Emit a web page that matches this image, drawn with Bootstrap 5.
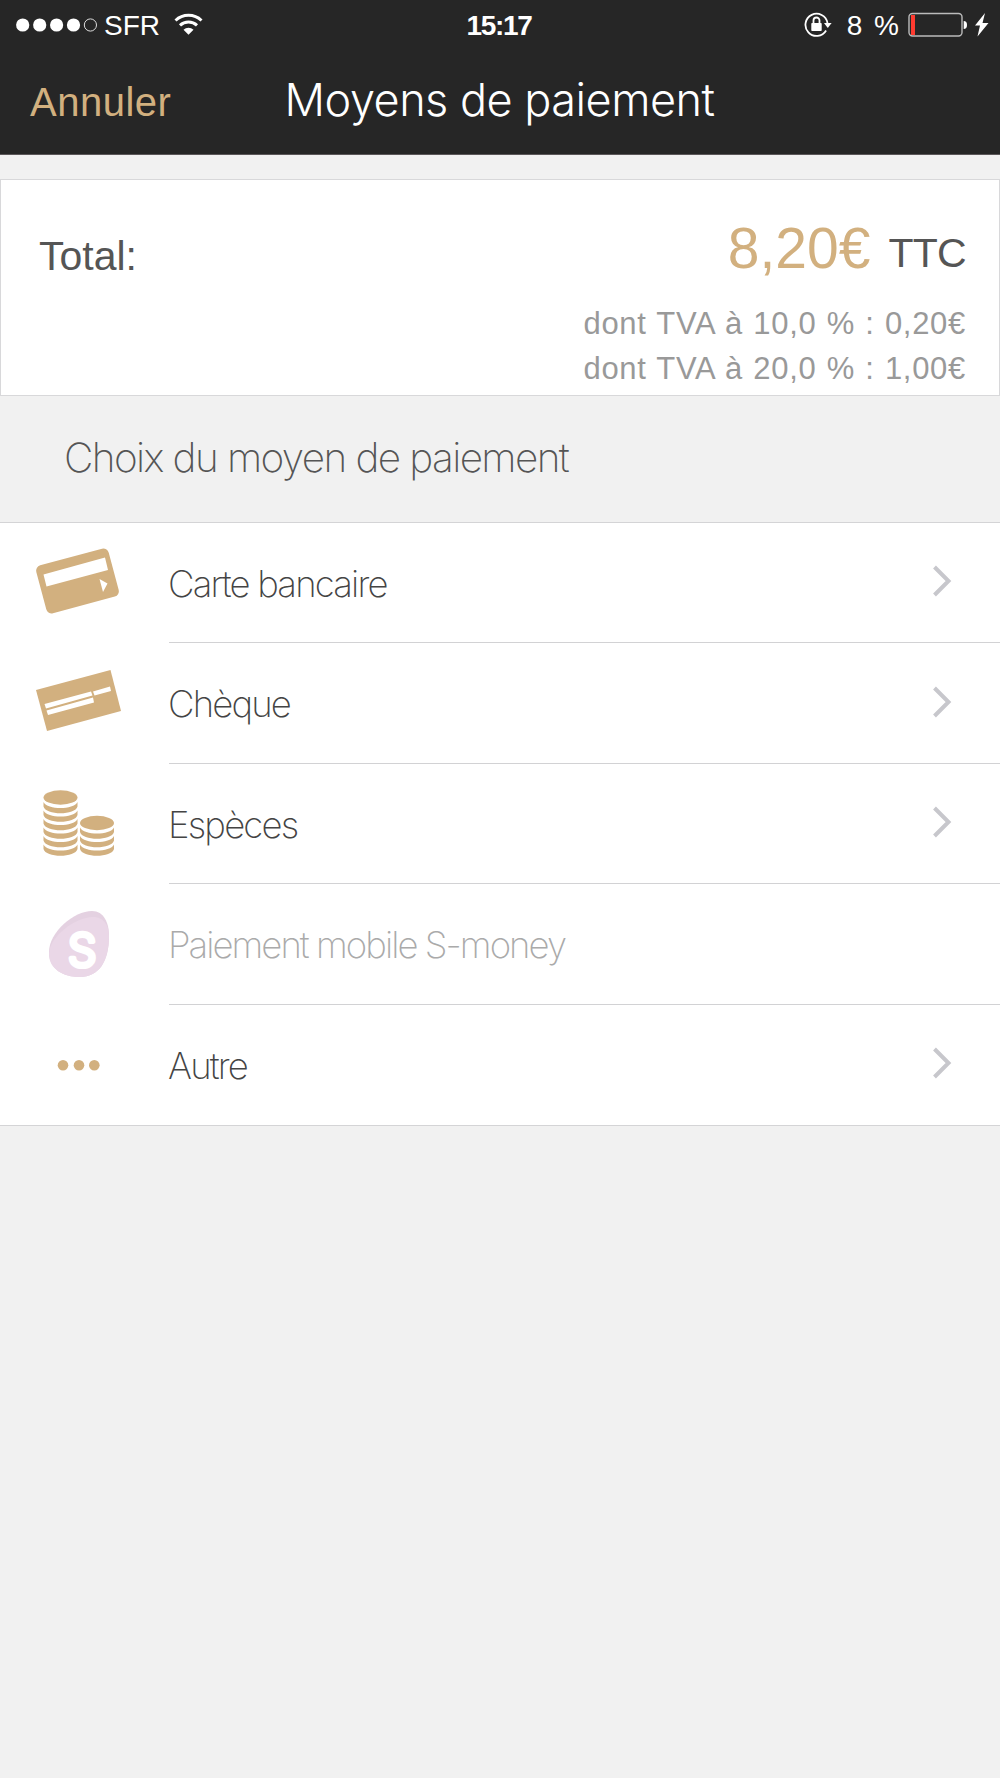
<!DOCTYPE html>
<html lang="fr">
<head>
<meta charset="utf-8">
<meta name="viewport" content="width=device-width, initial-scale=1">
<title>Moyens de paiement</title>
<link href="https://cdn.jsdelivr.net/npm/bootstrap@5.3.0/dist/css/bootstrap.min.css" rel="stylesheet">
<style>
body{background:#f1f1f1;font-family:"Liberation Sans",Arial,sans-serif;color:#555}
.gold{color:#d2b07f}
.app-header{background:#262626;height:155px;border-bottom:1px solid #5b5759;color:#fff}
.status-row{height:51px;line-height:51px;font-size:28px;padding-left:16px;padding-right:10px}
.status-side{flex:1 1 0}
.carrier{margin-left:6px}
.wifi{margin-left:14px}
.charge{margin-left:15px;word-spacing:4px}
.battery{margin-left:9px}
.clock{font-weight:700;font-size:28px;letter-spacing:-1.3px;padding-right:8px}
.nav-row{height:98px}
.nav-side{flex:1 1 0;padding:3px 0 0 30px}
.cancel{font-size:40px;letter-spacing:.5px;line-height:1.1;text-decoration:none}
.screen-title{font-family:Inter,sans-serif;font-weight:300;font-size:45px;line-height:1.2;letter-spacing:-.5px;padding-right:31px}
.total-card{margin-top:24px;height:217px;border:1px solid #d8d8da;padding:38px 33px 0 38px}
.total-label{font-size:41px;line-height:60px;padding-top:8px}
.price{font-size:57px;line-height:60px;margin-bottom:22.5px}
.ttc{display:inline-block;font-size:41px;line-height:1;margin-left:18px;padding-bottom:2px;letter-spacing:-.7px;color:#555;vertical-align:1px}
.tax{font-size:31px;line-height:45.3px;color:#999;letter-spacing:.7px;word-spacing:1px}
.section-head{height:126px;padding:0 0 2px 64px;font-family:Inter,sans-serif;font-weight:200;font-size:40.5px;letter-spacing:-1.6px}
.pay-list{border-top:1px solid #d4d4d6;border-bottom:1px solid #d4d4d6}
.pay-row{height:120.4px;color:#444;text-decoration:none}
.pay-icon{width:169px;height:120px;flex:none}
.pay-body{height:100%;padding-right:48px;border-bottom:1px solid #d2d2d4;font-family:Inter,sans-serif;font-weight:200;font-size:36.5px;letter-spacing:-1.8px}
.pay-body span{margin-left:-1px;padding-top:3px}
.pay-row:last-child .pay-body{border-bottom:0}
.disabled-row .pay-body{color:#aaa;letter-spacing:-1.95px}
.chev{margin-bottom:3px}
</style>
<script src="https://cdn.jsdelivr.net/npm/bootstrap@5.3.0/dist/js/bootstrap.bundle.min.js"></script>
</head>
<body>
<header class="app-header">
  <div class="status-row d-flex align-items-center">
    <div class="status-side d-flex align-items-center">
      <svg width="82" height="16" viewBox="0 0 82 16"><g fill="#fff"><circle cx="6.7" cy="7" r="6.6"/><circle cx="23.7" cy="7" r="6.6"/><circle cx="40.6" cy="7" r="6.6"/><circle cx="57.5" cy="7" r="6.6"/></g><circle cx="74.4" cy="7" r="6.1" fill="none" stroke="#ddd"/></svg>
      <span class="carrier">SFR</span>
      <svg class="wifi" width="30" height="26" viewBox="0 0 30 26"><g fill="none" stroke="#fff" stroke-width="3"><path d="M1.500 7.500a19 19 0 0 1 26 0"/><path d="M6 12.300a12.500 12.500 0 0 1 17 0"/></g><path d="M14.500 21.800l-5-5a7.200 7.200 0 0 1 10 0z" fill="#fff"/></svg>
    </div>
    <div class="clock">15:17</div>
    <div class="status-side d-flex align-items-center justify-content-end">
      <svg width="28" height="28" viewBox="0 0 28 28"><path d="M22.100 18.500a11.100 11.100 0 1 1 1.400-7.500" fill="none" stroke="#fff" stroke-width="1.800"/><path d="M20 11h7.600l-3.800 5z" fill="#fff"/><rect x="7.300" y="11" width="10.400" height="8" rx=".8" fill="#fff"/><path d="M9.500 11.500V8.500a3 3 0 0 1 6 0v3" fill="none" stroke="#fff" stroke-width="1.800"/></svg>
      <span class="charge">8 %</span>
      <svg class="battery" width="82" height="28" viewBox="0 0 82 28"><rect x="1" y="1.500" width="53" height="22.500" rx="3.500" fill="none" stroke="#bbb" stroke-width="1.400"/><path d="M3 3h4v20H3z" fill="#ff3b30"/><path d="M55.700 9q3.300 0 3.300 4t-3.300 4z" fill="#fff"/><path d="M77 1L67 13.500h5L69.500 24.500 80.500 11h-6z" fill="#fff"/></svg>
    </div>
  </div>
  <nav class="nav-row d-flex align-items-center">
    <div class="nav-side"><a href="#" class="cancel gold">Annuler</a></div>
    <h1 class="screen-title mb-0">Moyens de paiement</h1>
    <div class="status-side"></div>
  </nav>
</header>
<main>
  <section class="total-card bg-white d-flex justify-content-between">
    <div class="total-label">Total:</div>
    <div class="text-end">
      <div class="price gold">8,20€<span class="ttc">TTC</span></div>
      <div class="tax">dont TVA à 10,0 % : 0,20€</div>
      <div class="tax">dont TVA à 20,0 % : 1,00€</div>
    </div>
  </section>
  <h2 class="section-head mb-0 d-flex align-items-center">Choix du moyen de paiement</h2>
  <div class="pay-list bg-white">
    <a href="#" class="pay-row d-flex">
      <svg class="pay-icon" viewBox="0 523 169 120"><rect x="40" y="556.300" width="75" height="49.500" rx="5.500" transform="rotate(-15 77.300 581)" fill="#d2b07f"/><path d="M43.500 574.500L105 557.500l3 12.500-61.500 16.500zM99.500 579l8 4.500-4.500 8.500z" fill="#fff"/></svg>
      <div class="pay-body flex-grow-1 d-flex align-items-center justify-content-between"><span>Carte bancaire</span><svg class="chev" width="20" height="34" viewBox="0 0 20 34"><path d="M2.500 3l14 14-14 14" fill="none" stroke="#c7c7cc" stroke-width="4"/></svg></div>
    </a>
    <a href="#" class="pay-row d-flex">
      <svg class="pay-icon" viewBox="0 643 169 120"><path d="M36 690l74.500-20L121 711l-74 20z" fill="#d2b07f"/><path d="M44.500 704L91 691.500l1.500 4L46 708.500zM46.500 710.500l46.500-13 1 5L48 715zM93 691.500l17-5 1 4.500-16.500 4.500z" fill="#fff"/></svg>
      <div class="pay-body flex-grow-1 d-flex align-items-center justify-content-between"><span>Chèque</span><svg class="chev" width="20" height="34" viewBox="0 0 20 34"><path d="M2.500 3l14 14-14 14" fill="none" stroke="#c7c7cc" stroke-width="4"/></svg></div>
    </a>
    <a href="#" class="pay-row d-flex">
      <svg class="pay-icon" viewBox="0 763.500 169 120" fill="#d2b07f">
        <defs><path id="coin" d="M0 0C4 8 30 8 34 0V4.500C32 13.500 2 13.500 0 4.500z"/></defs>
        <ellipse cx="60.500" cy="797" rx="17" ry="7.200"/>
        <use href="#coin" x="43.500" y="801.500"/><use href="#coin" x="43.500" y="810"/><use href="#coin" x="43.500" y="818.500"/><use href="#coin" x="43.500" y="827"/><use href="#coin" x="43.500" y="835.500"/><use href="#coin" x="43.500" y="844"/>
        <ellipse cx="97" cy="822.500" rx="17" ry="7.200"/>
        <use href="#coin" x="80" y="827"/><use href="#coin" x="80" y="835.500"/><use href="#coin" x="80" y="844"/>
      </svg>
      <div class="pay-body flex-grow-1 d-flex align-items-center justify-content-between"><span>Espèces</span><svg class="chev" width="20" height="34" viewBox="0 0 20 34"><path d="M2.500 3l14 14-14 14" fill="none" stroke="#c7c7cc" stroke-width="4"/></svg></div>
    </a>
    <div class="pay-row disabled-row d-flex">
      <svg class="pay-icon" viewBox="0 884 169 120"><path d="M92 911c12 0 17 12 17 25 0 25-10 41-29 41-17 0-31-8-31-25 0-20 25-41 43-41z" fill="#e4d1e1"/><path d="M93 917c12 0 16 10 16 19 0 25-10 41-29 41-17 0-31-8-31-23 0-17 26-37 44-37z" fill="#ead7e7"/><text x="82.300" y="966" text-anchor="middle" font-family="Inter" font-weight="300" font-size="45" fill="#fff" stroke="#fff" stroke-width="4.500" stroke-linejoin="round">S</text></svg>
      <div class="pay-body flex-grow-1 d-flex align-items-center"><span>Paiement mobile S-money</span></div>
    </div>
    <a href="#" class="pay-row d-flex">
      <svg class="pay-icon" viewBox="0 1005 169 120" fill="#d2b07f"><circle cx="63" cy="1065.300" r="5.300"/><circle cx="79" cy="1065.300" r="5.300"/><circle cx="94.300" cy="1065.300" r="5.300"/></svg>
      <div class="pay-body flex-grow-1 d-flex align-items-center justify-content-between"><span>Autre</span><svg class="chev" width="20" height="34" viewBox="0 0 20 34"><path d="M2.500 3l14 14-14 14" fill="none" stroke="#c7c7cc" stroke-width="4"/></svg></div>
    </a>
  </div>
</main>
</body>
</html>
